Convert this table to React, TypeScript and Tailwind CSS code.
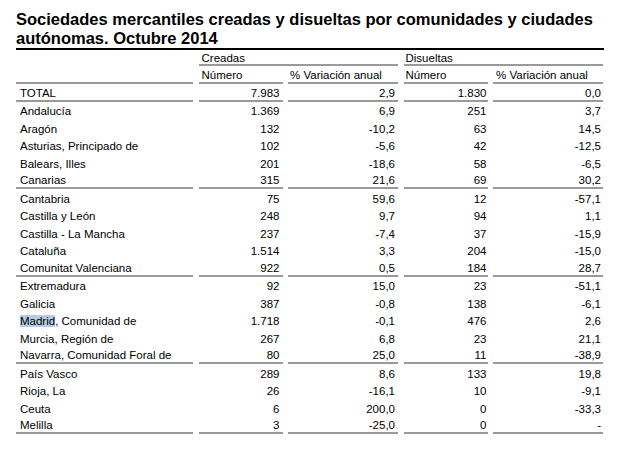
type Row = {
  name: string;
  creadas: string;
  varCreadas: string;
  disueltas: string;
  varDisueltas: string;
  end?: boolean;
};

const rows: Row[] = [
  { name: "TOTAL", creadas: "7.983", varCreadas: "2,9", disueltas: "1.830", varDisueltas: "0,0", end: true },
  { name: "Andalucía", creadas: "1.369", varCreadas: "6,9", disueltas: "251", varDisueltas: "3,7" },
  { name: "Aragón", creadas: "132", varCreadas: "-10,2", disueltas: "63", varDisueltas: "14,5" },
  { name: "Asturias, Principado de", creadas: "102", varCreadas: "-5,6", disueltas: "42", varDisueltas: "-12,5" },
  { name: "Balears, Illes", creadas: "201", varCreadas: "-18,6", disueltas: "58", varDisueltas: "-6,5" },
  { name: "Canarias", creadas: "315", varCreadas: "21,6", disueltas: "69", varDisueltas: "30,2", end: true },
  { name: "Cantabria", creadas: "75", varCreadas: "59,6", disueltas: "12", varDisueltas: "-57,1" },
  { name: "Castilla y León", creadas: "248", varCreadas: "9,7", disueltas: "94", varDisueltas: "1,1" },
  { name: "Castilla - La Mancha", creadas: "237", varCreadas: "-7,4", disueltas: "37", varDisueltas: "-15,9" },
  { name: "Cataluña", creadas: "1.514", varCreadas: "3,3", disueltas: "204", varDisueltas: "-15,0" },
  { name: "Comunitat Valenciana", creadas: "922", varCreadas: "0,5", disueltas: "184", varDisueltas: "28,7", end: true },
  { name: "Extremadura", creadas: "92", varCreadas: "15,0", disueltas: "23", varDisueltas: "-51,1" },
  { name: "Galicia", creadas: "387", varCreadas: "-0,8", disueltas: "138", varDisueltas: "-6,1" },
  { name: "Madrid, Comunidad de", creadas: "1.718", varCreadas: "-0,1", disueltas: "476", varDisueltas: "2,6" },
  { name: "Murcia, Región de", creadas: "267", varCreadas: "6,8", disueltas: "23", varDisueltas: "21,1" },
  { name: "Navarra, Comunidad Foral de", creadas: "80", varCreadas: "25,0", disueltas: "11", varDisueltas: "-38,9", end: true },
  { name: "País Vasco", creadas: "289", varCreadas: "8,6", disueltas: "133", varDisueltas: "19,8" },
  { name: "Rioja, La", creadas: "26", varCreadas: "-16,1", disueltas: "10", varDisueltas: "-9,1" },
  { name: "Ceuta", creadas: "6", varCreadas: "200,0", disueltas: "0", varDisueltas: "-33,3" },
  { name: "Melilla", creadas: "3", varCreadas: "-25,0", disueltas: "0", varDisueltas: "-", end: true },
];

function Label({ name }: { name: string }) {
  // the word "Madrid" is selected (highlighted) in the screenshot
  if (name.startsWith("Madrid")) {
    return (
      <span>
        <span className="bg-[#b4cce4]">Madrid</span>
        {name.slice(6)}
      </span>
    );
  }
  return <span>{name}</span>;
}

export default function App() {
  const cell = "flex items-center h-[17.5px] pt-[2px] whitespace-nowrap";
  const line = "border-b-2 border-[#9a9a9a]";

  return (
    <div className="w-[627px] h-[452px] bg-white text-black font-['Liberation_Sans',Arial,sans-serif] overflow-hidden">
      <h1 className="pl-[16px] pt-[10px] text-[16.5px] leading-[19px] font-bold">
        Sociedades mercantiles creadas y disueltas por comunidades y ciudades
        <br />
        autónomas. Octubre 2014
      </h1>

      <div className="ml-[16px] w-[588px] border-t-2 border-black grid grid-cols-[177px_84px_110px_84px_110px] gap-x-[5.5px] text-[11.5px] leading-[14px]">
        {/* header row 1 */}
        <div className="h-[16px]" />
        <div className={`col-span-2 h-[16px] pt-[1px] pl-[3px] flex items-center ${line}`}>Creadas</div>
        <div className={`col-span-2 h-[16px] pt-[1px] pl-[2px] flex items-center ${line}`}>Disueltas</div>

        {/* header row 2 */}
        <div className={`h-[18px] ${line}`} />
        <div className={`h-[18px] pt-[2px] pl-[3px] flex items-center ${line}`}>Número</div>
        <div className={`h-[18px] pt-[2px] pl-[2px] flex items-center ${line}`}>% Variación anual</div>
        <div className={`h-[18px] pt-[2px] pl-[2px] flex items-center ${line}`}>Número</div>
        <div className={`h-[18px] pt-[2px] pl-[3px] flex items-center ${line}`}>% Variación anual</div>

        {rows.map((r) => {
          const b = r.end ? line : "";
          return (
            <div key={r.name} className="contents">
              <div className={`${cell} pl-[4px] ${b}`}>
                <Label name={r.name} />
              </div>
              <div className={`${cell} justify-end pr-[3px] ${b}`}>{r.creadas}</div>
              <div className={`${cell} justify-end pr-[3px] ${b}`}>{r.varCreadas}</div>
              <div className={`${cell} justify-end pr-[1px] ${b}`}>{r.disueltas}</div>
              <div className={`${cell} justify-end pr-[2px] ${b}`}>{r.varDisueltas}</div>
            </div>
          );
        })}
      </div>
    </div>
  );
}
